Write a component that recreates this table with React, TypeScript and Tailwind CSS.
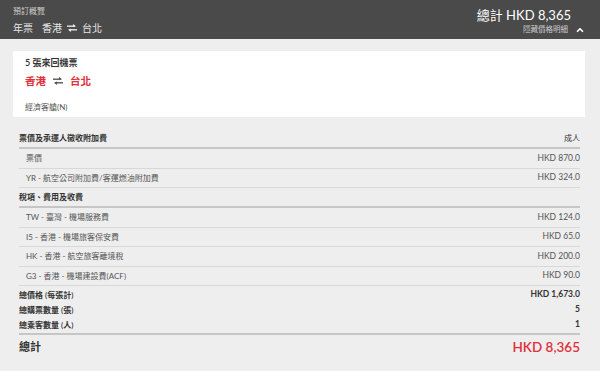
import React from "react";
import { ChevronUp } from "lucide-react";

const font = "font-['Lato','Noto_Sans_CJK_TC',sans-serif]";

function Swap({ color, className }: { color: string; className?: string }) {
  return (
    <svg width="10" height="8" viewBox="0 0 10 8" className={className}>
      <path d="M0 2.2H8" stroke={color} strokeWidth="1.4" />
      <path d="M6 0L9 2.2L6 3.2Z" fill={color} />
      <path d="M2 5.8H10" stroke={color} strokeWidth="1.4" />
      <path d="M4 4.6L1 5.8L4 8Z" fill={color} />
    </svg>
  );
}

function Row({ label, value }: { label: string; value: string }) {
  return (
    <div className="flex h-[19.5px] items-center justify-between border-b border-[#d8d8d8] pl-[7px] text-[8px] text-[#555]">
      <span>{label}</span>
      <span className="text-[8.5px]">{value}</span>
    </div>
  );
}

function SectionHead({ label, value }: { label: string; value?: string }) {
  return (
    <div className="flex h-[20px] items-center justify-between border-b-2 border-[#c6c6c6] text-[8px] font-semibold text-[#333]">
      <span>{label}</span>
      {value && <span className="font-normal">{value}</span>}
    </div>
  );
}

function SumRow({ label, value }: { label: string; value: string }) {
  return (
    <div className="flex h-[15px] items-center justify-between text-[8px] font-semibold text-[#333]">
      <span>{label}</span>
      <span className="text-[8.5px] font-bold">{value}</span>
    </div>
  );
}

export default function App() {
  return (
    <div className={`h-[371px] w-[600px] overflow-hidden bg-[#eeeeee] ${font}`}>
      <div className="flex h-[39px] items-center justify-between bg-[#4a4a4a] pl-[13px] pr-[15px]">
        <div className="flex flex-col">
          <div className="text-[8px] leading-[10px] text-[#d0d0d0]">預訂概覽</div>
          <div className="mt-[6px] flex items-center text-[10px] leading-[12px] text-[#e6e6e6]">
            <span>年票</span>
            <span className="ml-[9px]">香港</span>
            <Swap color="#e6e6e6" className="mx-[5px]" />
            <span>台北</span>
          </div>
        </div>
        <div className="mt-[3px] flex flex-col items-end">
          <div className="mr-[14px] text-[13px] leading-[15px] text-white">總計 HKD 8,365</div>
          <div className="mt-[2px] flex items-center text-[7.5px] leading-[10px] text-[#cfcfcf]">
            <span>隱藏價格明細</span>
            <ChevronUp size={10} strokeWidth={4} color="#ffffff" className="ml-[7px]" />
          </div>
        </div>
      </div>

      <div className="pl-[13px] pr-[15px] pt-[12px]">
        <div className="h-[66px] bg-white pl-[12px] pt-[6px]">
          <div className="text-[9px] font-semibold leading-[12px] text-[#333]">5 張來回機票</div>
          <div className="mt-[5px] flex items-center text-[10.5px] font-semibold leading-[14px] text-[#e0313b]">
            <span>香港</span>
            <Swap color="#555" className="mx-[7px]" />
            <span>台北</span>
          </div>
          <div className="mt-[14px] text-[8px] leading-[10px] text-[#555]">經濟客艙(N)</div>
        </div>
      </div>

      <div className="mt-[12px] pl-[19px] pr-[20px]">
        <SectionHead label="票價及承運人徵收附加費" value="成人" />
        <Row label="票價" value="HKD 870.0" />
        <Row label="YR - 航空公司附加費/客運燃油附加費" value="HKD 324.0" />
        <SectionHead label="稅項、費用及收費" />
        <Row label="TW - 臺灣 - 機場服務費" value="HKD 124.0" />
        <Row label="I5 - 香港 - 機場旅客保安費" value="HKD 65.0" />
        <Row label="HK - 香港 - 航空旅客離境稅" value="HKD 200.0" />
        <Row label="G3 - 香港 - 機場建設費(ACF)" value="HKD 90.0" />
        <div className="pt-[1px]">
          <SumRow label="總價格 (每張計)" value="HKD 1,673.0" />
          <SumRow label="總購票數量 (張)" value="5" />
          <SumRow label="總乘客數量 (人)" value="1" />
        </div>
        <div className="mt-[1px] border-t-[2px] border-[#c6c6c6]" />
        <div className="flex h-[24px] items-center justify-between">
          <span className="text-[11px] font-semibold text-[#333]">總計</span>
          <span className="text-[13.5px] font-semibold text-[#e0313b]">HKD 8,365</span>
        </div>
      </div>
    </div>
  );
}
